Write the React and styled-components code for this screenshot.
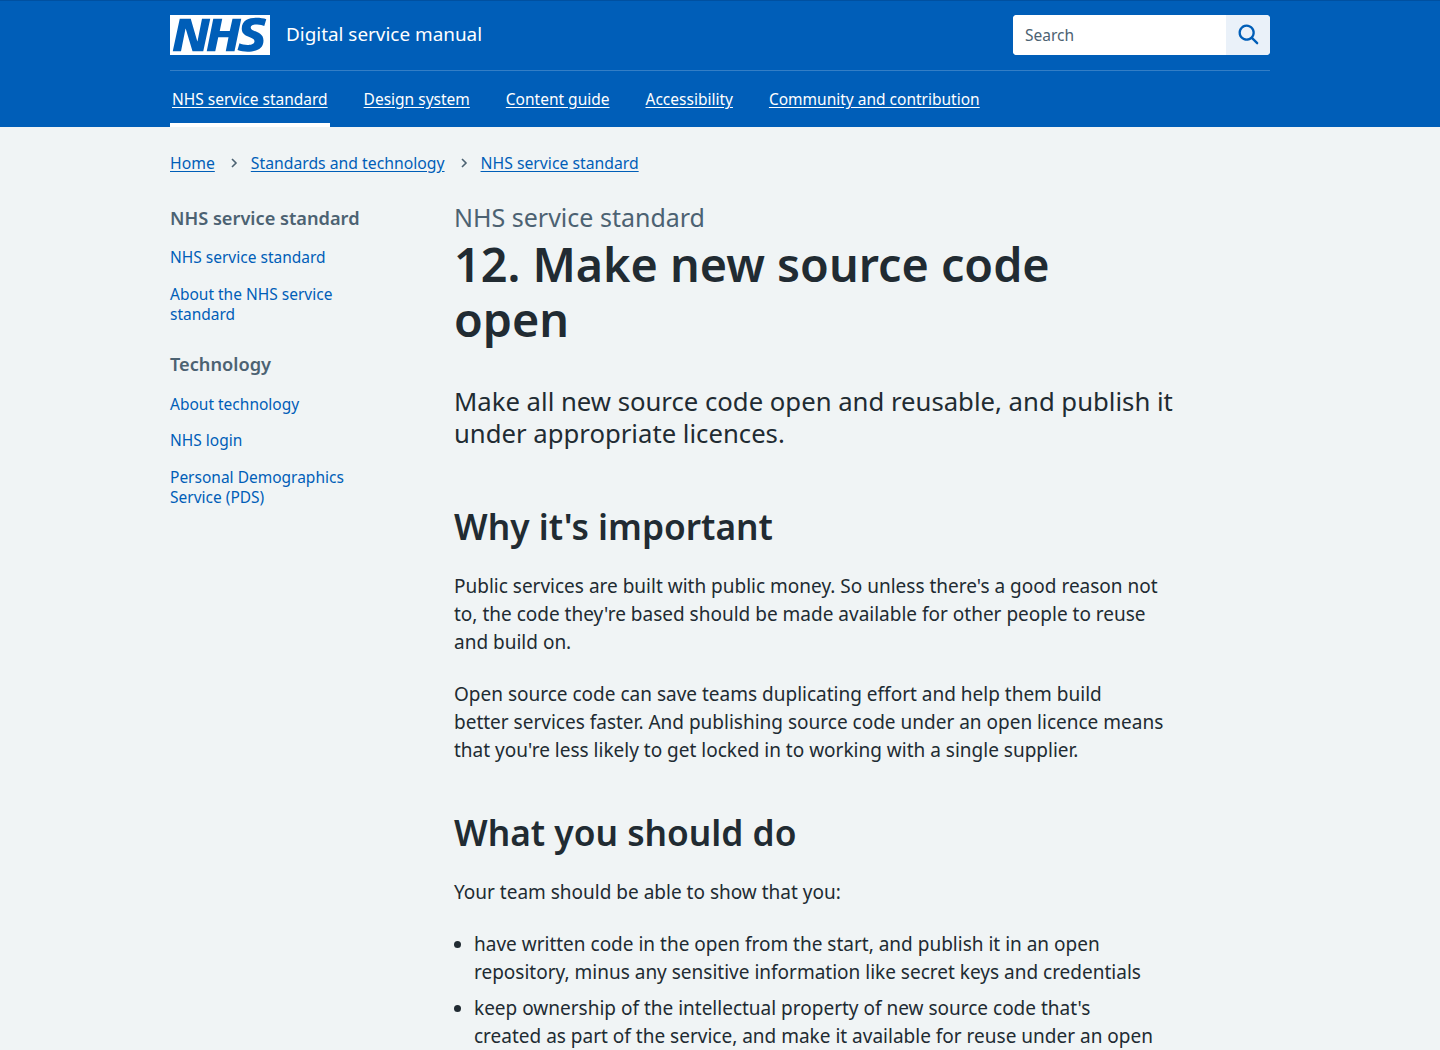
import React from 'react'
import styled, { createGlobalStyle } from 'styled-components'

const GlobalStyle = createGlobalStyle`
  html, body {
    margin: 0;
    padding: 0;
    height: 1050px;
    overflow: hidden;
    background: #f0f4f5;
    color: #212b32;
    font-family: "Noto Sans", "Open Sans", Arial, sans-serif;
  }
  * { box-sizing: border-box; }
`

const Header = styled.header`
  background: #005eb8;
  border-top: 1px solid #0050a0;
`
const Inner = styled.div`
  width: 1100px;
  margin: 0 auto;
`
const TopRow = styled.div`
  display: flex;
  align-items: center;
  justify-content: space-between;
  height: 70px;
  padding-bottom: 1px;
  border-bottom: 1px solid #337ec6;
`
const Brand = styled.a`
  display: flex;
  align-items: center;
  gap: 16px;
  color: #fff;
  font-size: 18.9px;
  text-decoration: none;
`
const BrandName = styled.span`
  padding-bottom: 2px;
`
const Logo = styled.svg`
  display: block;
  width: 100px;
  height: 40px;
`
const SearchBox = styled.form`
  display: flex;
  width: 257px;
  height: 40px;
  border-radius: 4px;
  overflow: hidden;
  background: #fff;
`
const SearchInput = styled.input`
  flex: 1;
  min-width: 0;
  border: 0;
  outline: 0;
  padding: 0 12px;
  font: inherit;
  font-size: 15.5px;
  color: #212b32;
  &::placeholder { color: #4c6272; opacity: 1; }
`
const SearchButton = styled.button`
  width: 44px;
  border: 0;
  padding: 0 0 0 2px;
  display: flex;
  align-items: center;
  justify-content: center;
  background: #eaf1f9;
  color: #005eb8;
`
const NavList = styled.nav`
  display: flex;
  gap: 32px;
  height: 56px;
`
const NavLink = styled.a`
  display: block;
  padding: 0 2px;
  height: 56px;
  line-height: 56px;
  color: #fff;
  font-size: 15.5px;
  text-decoration: underline;
  text-underline-offset: 2px;
  border-bottom: ${p => (p.$active ? '4px solid #fff' : '0')};
`
const Crumbs = styled.div`
  display: flex;
  align-items: center;
  height: 72px;
  font-size: 15.75px;
`
const Link = styled.a`
  color: #005eb8;
  text-decoration: underline;
  text-underline-offset: 2px;
`
const CrumbSep = styled.svg`
  width: 8px;
  height: 12px;
  margin: 0 13px 0 15px;
  color: #4c6272;
`
const Layout = styled.div`
  display: flex;
`
const Sidebar = styled.aside`
  width: 284px;
  flex: none;
  padding-right: 64px;
`
const SideHeading = styled.h2`
  margin: ${p => (p.$first ? '5px' : '25.5px')} 0 15.25px;
  font-size: 18.2px;
  line-height: 28px;
  font-weight: 600;
  color: #4c6272;
`
const SideLinks = styled.ul`
  list-style: none;
  margin: 0;
  padding: 0;
  display: flex;
  flex-direction: column;
  gap: 16px;
  font-size: 15.5px;
  line-height: 20.5px;
`
const SideLink = styled.a`
  color: #005eb8;
  text-decoration: none;
`
const Main = styled.main`
  width: 722px;
  padding-top: 2px;
`
const Caption = styled.div`
  margin-bottom: 4px;
  font-size: 25px;
  line-height: 32px;
  color: #4c6272;
`
const Title = styled.h1`
  max-width: 700px;
  margin: 0 0 39px;
  font-size: 46.7px;
  line-height: 55px;
  font-weight: 600;
`
const Lede = styled.p`
  margin: 0 0 54px;
  font-size: 25.7px;
  line-height: 32px;
`
const SectionTitle = styled.h2`
  margin: 0 0 24px;
  font-size: 35.3px;
  line-height: 44px;
  font-weight: 600;
`
const Text = styled.p`
  max-width: 710px;
  margin: 0 0 ${p => p.$gap || 24}px;
  font-size: 19px;
  line-height: 28px;
`
const Bullets = styled.ul`
  max-width: 700px;
  margin: 0;
  padding: 0 0 0 20px;
  font-size: 19px;
  line-height: 28px;
  li { margin-bottom: 8px; }
`

export default function App() {
  return (
    <>
      <GlobalStyle />
      <Header>
        <Inner>
          <TopRow>
            <Brand href="#">
              <Logo viewBox="0 0 40 16" aria-label="NHS">
                <path fill="#fff" d="M0 0h40v16H0z" />
                <path fill="#005eb8" d="M3.9 1.5h4.4l2.6 9h.1l1.8-9h3.3l-2.8 13H9l-2.7-9h-.1l-1.8 9H1.1M17.3 1.5h3.6l-1 4.9h4L25 1.5h3.5l-2.7 13h-3.5l1.1-5.6h-4.1l-1.2 5.6h-3.4M37.7 4.4c-.7-.3-1.6-.6-2.9-.6-1.4 0-2.5.2-2.5 1.3 0 1.8 5.1 1.2 5.1 5.1 0 3.6-3.3 4.5-6.4 4.5-1.3 0-2.9-.3-4-.7l.8-2.7c.7.4 2.1.7 3.2.7s2.8-.2 2.8-1.5c0-2.1-5.1-1.3-5.1-5 0-3.4 2.9-4.4 5.8-4.4 1.6 0 3.1.2 4 .6" />
              </Logo>
              <BrandName>Digital service manual</BrandName>
            </Brand>
            <SearchBox onSubmit={e => e.preventDefault()}>
              <SearchInput placeholder="Search" />
              <SearchButton aria-label="Search">
                <svg width="28" height="28" viewBox="0 0 24 24" fill="currentColor">
                  <path d="M19.71 18.29l-4.11-4.1a7 7 0 1 0-1.41 1.41l4.1 4.11a1 1 0 0 0 1.42 0 1 1 0 0 0 0-1.42zM5 10a5 5 0 1 1 5 5 5 5 0 0 1-5-5z" />
                </svg>
              </SearchButton>
            </SearchBox>
          </TopRow>
          <NavList>
            <NavLink href="#" $active>NHS service standard</NavLink>
            <NavLink href="#">Design system</NavLink>
            <NavLink href="#">Content guide</NavLink>
            <NavLink href="#">Accessibility</NavLink>
            <NavLink href="#">Community and contribution</NavLink>
          </NavList>
        </Inner>
      </Header>
      <Inner>
        <Crumbs>
          <Link href="#">Home</Link>
          <CrumbSep viewBox="0 0 8 12"><path d="M2 2l4 4-4 4" fill="none" stroke="currentColor" strokeWidth="1.6" /></CrumbSep>
          <Link href="#">Standards and technology</Link>
          <CrumbSep viewBox="0 0 8 12"><path d="M2 2l4 4-4 4" fill="none" stroke="currentColor" strokeWidth="1.6" /></CrumbSep>
          <Link href="#">NHS service standard</Link>
        </Crumbs>
        <Layout>
          <Sidebar>
            <SideHeading $first>NHS service standard</SideHeading>
            <SideLinks>
              <li><SideLink href="#">NHS service standard</SideLink></li>
              <li><SideLink href="#">About the NHS service standard</SideLink></li>
            </SideLinks>
            <SideHeading>Technology</SideHeading>
            <SideLinks>
              <li><SideLink href="#">About technology</SideLink></li>
              <li><SideLink href="#">NHS login</SideLink></li>
              <li><SideLink href="#">Personal Demographics Service (PDS)</SideLink></li>
            </SideLinks>
          </Sidebar>
          <Main>
            <Caption>NHS service standard</Caption>
            <Title>12. Make new source code open</Title>
            <Lede>Make all new source code open and reusable, and publish it under appropriate licences.</Lede>
            <SectionTitle>Why it's important</SectionTitle>
            <Text>Public services are built with public money. So unless there's a good reason not to, the code they're based should be made available for other people to reuse and build on.</Text>
            <Text $gap={46}>Open source code can save teams duplicating effort and help them build<br />better services faster. And publishing source code under an open licence means that you're less likely to get locked in to working with a single supplier.</Text>
            <SectionTitle>What you should do</SectionTitle>
            <Text>Your team should be able to show that you:</Text>
            <Bullets>
              <li>have written code in the open from the start, and publish it in an open repository, minus any sensitive information like secret keys and credentials</li>
              <li>keep ownership of the intellectual property of new source code that's created as part of the service, and make it available for reuse under an open licence</li>
            </Bullets>
          </Main>
        </Layout>
      </Inner>
    </>
  )
}
